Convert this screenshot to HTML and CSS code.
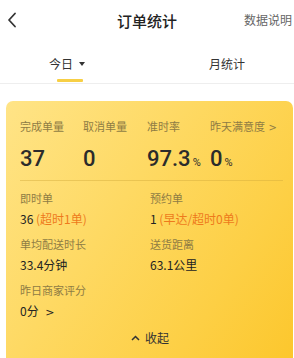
FILE: index.html
```
<!DOCTYPE html>
<html lang="zh-CN">
<head>
<meta charset="utf-8">
<link rel="stylesheet" href="styles.css">
</head>
<body>
<div class="header">
  <svg class="back" width="10" height="16" viewBox="0 0 10 16"><path d="M8 1.5 L2 8 L8 14.5" fill="none" stroke="#333" stroke-width="1.8" stroke-linecap="round" stroke-linejoin="round"/></svg>
  <div class="title">订单统计</div>
  <div class="help">数据说明</div>
</div>
<div class="tabs">
  <div class="tab active"><span>今日</span><span class="caret"></span><i class="bar"></i></div>
  <div class="tab"><span>月统计</span></div>
</div>
<div class="card">
  <div class="top">
    <div class="lbl">完成单量</div>
    <div class="lbl">取消单量</div>
    <div class="lbl">准时率</div>
    <div class="lbl">昨天满意度 <span class="chev">&gt;</span></div>
    <div class="num">37</div>
    <div class="num">0</div>
    <div class="num">97.3<small>%</small></div>
    <div class="num">0<small>%</small></div>
  </div>
  <div class="sep"></div>
  <div class="grid">
    <div class="item"><div class="lbl">即时单</div><div class="val">36 <em>(超时1单)</em></div></div>
    <div class="item"><div class="lbl">预约单</div><div class="val">1 <em>(早达/超时0单)</em></div></div>
    <div class="item"><div class="lbl">单均配送时长</div><div class="val">33.4分钟</div></div>
    <div class="item"><div class="lbl">送货距离</div><div class="val">63.1公里</div></div>
    <div class="item"><div class="lbl">昨日商家评分</div><div class="val">0分 <span class="chev2">&gt;</span></div></div>
  </div>
  <div class="fold"><svg width="9" height="6" viewBox="0 0 9 6"><path d="M1 5 L4.5 1.5 L8 5" fill="none" stroke="#333" stroke-width="1.5"/></svg><span>收起</span></div>
</div>
</body>
</html>
```
FILE: styles.css
```
* { box-sizing: border-box; margin: 0; padding: 0; }
body {
  width: 294px;
  height: 358px;
  overflow: hidden;
  background: #fff;
  font-family: "Noto Sans CJK SC", "Noto Sans", sans-serif;
  color: #333;
}
.header {
  height: 40px;
  display: flex;
  align-items: center;
  justify-content: center;
  position: relative;
}
.back { position: absolute; left: 7px; top: 12px; }
.title { font-size: 15px; color: #222; font-weight: 500; }
.help { position: absolute; right: 2px; top: 11px; font-size: 12px; color: #666; }
.tabs {
  height: 44px;
  display: flex;
  border-bottom: 1px solid #eee;
}
.tab {
  flex: 1;
  display: flex;
  align-items: center;
  justify-content: center;
  font-size: 12px;
  color: #333;
  position: relative;
  padding-top: 4px;
}
.tab:first-child { padding-right: 8px; }
.tab:last-child { padding-left: 18px; }
.caret {
  width: 0; height: 0;
  margin-left: 6px;
  border-left: 3.5px solid transparent;
  border-right: 3.5px solid transparent;
  border-top: 4px solid #333;
}
.bar {
  position: absolute;
  left: 57px;
  bottom: 1px;
  width: 26px;
  height: 3px;
  border-radius: 1px;
  background: #f7cf45;
}
.card {
  margin: 17px 1px 0 6px;
  border-radius: 7px 7px 0 0;
  background: linear-gradient(125deg, #ffe487 0%, #fed963 40%, #fdcf44 75%, #fcc72d 100%);
  padding: 17px 10px 0 14px;
  height: 257px;
  overflow: hidden;
}
.top {
  display: grid;
  grid-template-columns: 63px 64px 63px 1fr;
  row-gap: 10px;
}
.lbl { font-size: 11px; line-height: 16px; color: #8f7c44; white-space: nowrap; }
.chev { font-family: "DejaVu Sans", sans-serif; font-size: 10px; margin-left: 1px; }
.num {
  font-family: Roboto, "Liberation Sans", sans-serif;
  font-size: 22px;
  font-weight: 500;
  line-height: 26px;
  color: #2b2b2b;
}
.num small { font-size: 11px; font-weight: 400; margin-left: 2px; }
.sep { height: 1px; background: rgba(210, 170, 60, 0.45); margin: 4px 0 0 0; width: 263px; }
.grid {
  display: grid;
  grid-template-columns: 130px 1fr;
  row-gap: 8px;
  padding-top: 9px;
}
.item { display: flex; flex-direction: column; gap: 4px; }
.val { font-size: 12px; line-height: 18px; color: #222; white-space: nowrap; }
.val em { font-style: normal; color: #ee7a1c; }
.chev2 { font-family: "DejaVu Sans", sans-serif; font-size: 11px; margin-left: 4px; }
.fold {
  display: flex;
  align-items: center;
  justify-content: center;
  gap: 5px;
  margin-top: 8px;
  font-size: 12px;
  line-height: 16px;
  color: #333;
  padding-right: 3px;
}
```
